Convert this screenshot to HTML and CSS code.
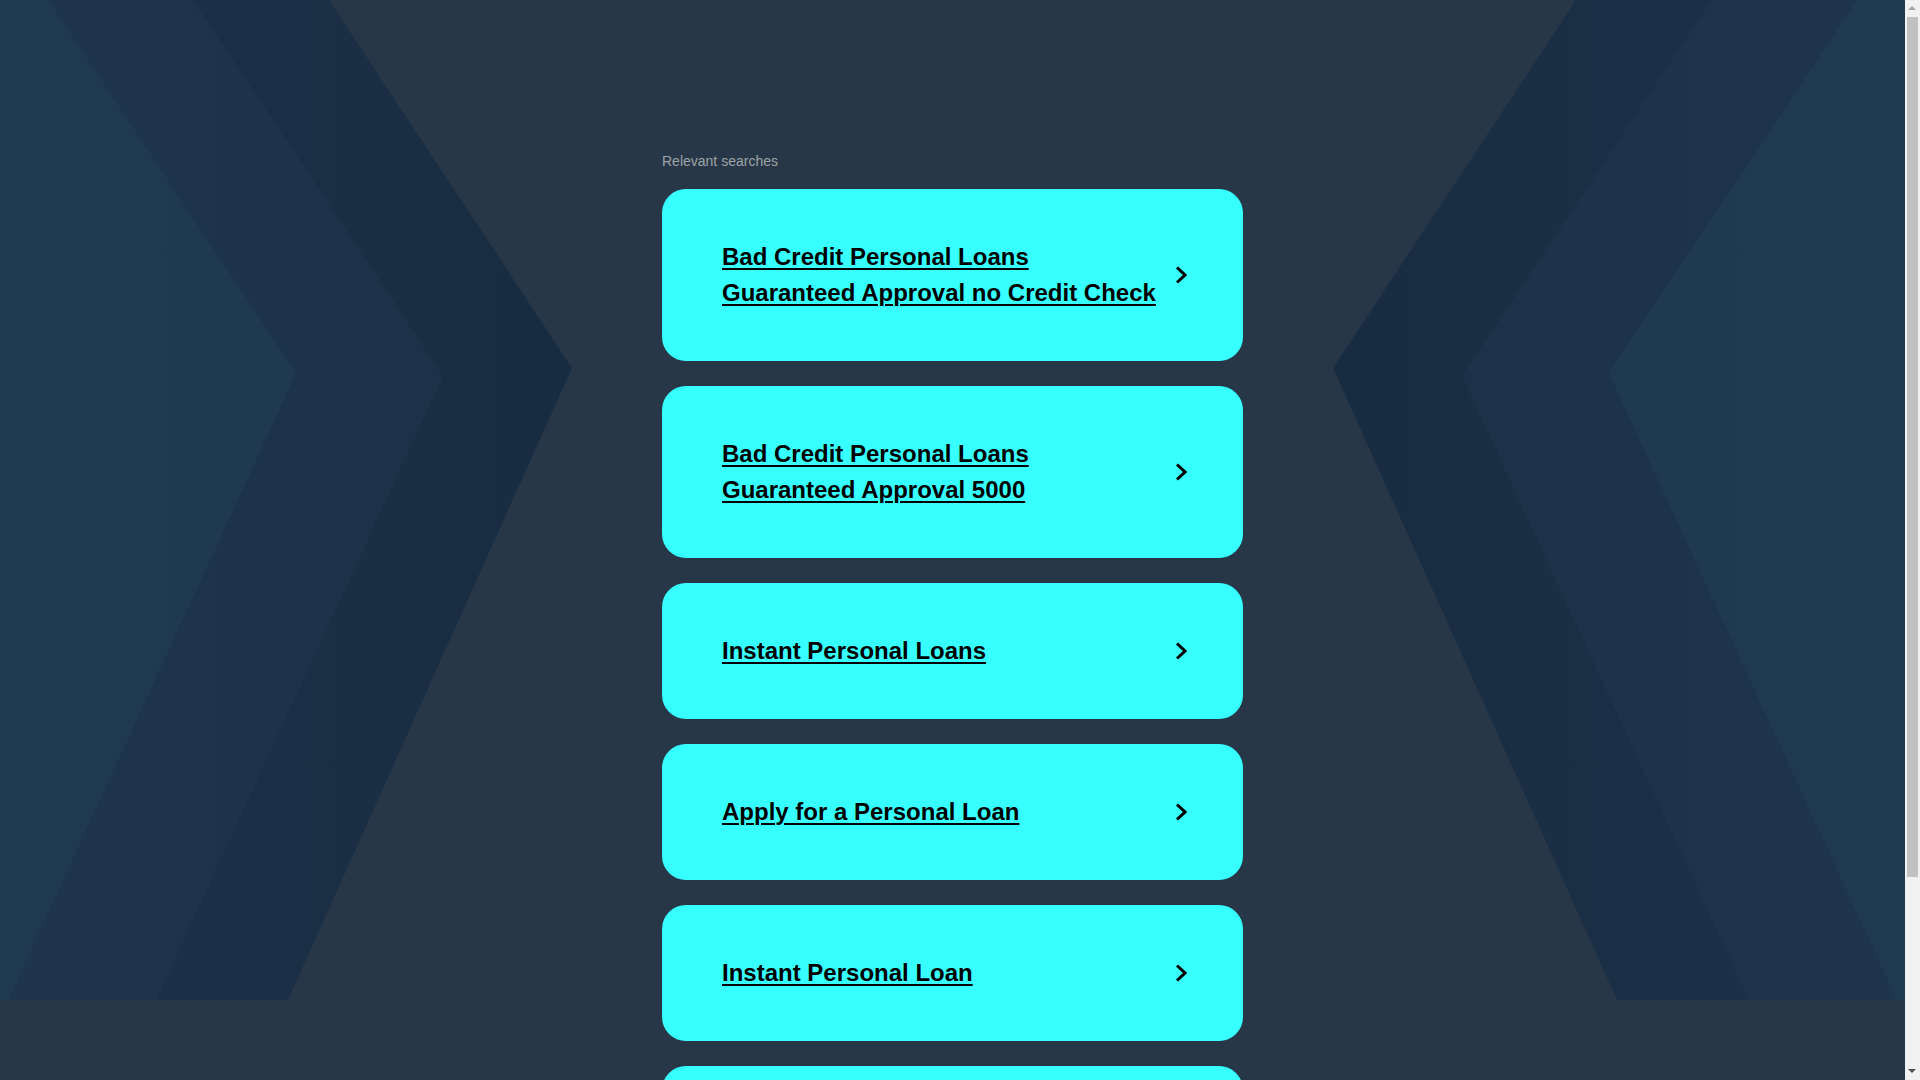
FILE: index.html
```html
<!DOCTYPE html>
<html lang="en">
<head>
<meta charset="utf-8">
<title>Relevant searches</title>
<link rel="stylesheet" href="styles.css">
</head>
<body>
<div class="bg" aria-hidden="true">
  <svg class="bg-svg" viewBox="0 0 1905 1000" preserveAspectRatio="none" xmlns="http://www.w3.org/2000/svg">
    <defs>
      <linearGradient id="gOuter" x1="0" y1="0" x2="1" y2="0">
        <stop offset="0" stop-color="#1c3249"/>
        <stop offset="1" stop-color="#182c41"/>
      </linearGradient>
      <linearGradient id="gMid" x1="0" y1="0" x2="1" y2="0">
        <stop offset="0" stop-color="#1f354c"/>
        <stop offset="1" stop-color="#1c3249"/>
      </linearGradient>
      <linearGradient id="gInner" x1="0" y1="0" x2="1" y2="0">
        <stop offset="0" stop-color="#203a51"/>
        <stop offset="1" stop-color="#1f3a50"/>
      </linearGradient>
    </defs>
    <g>
      <polygon points="0,0 329,0 572,368 288,1000 0,1000" fill="url(#gOuter)"/>
      <polygon points="0,0 193,0 443,376 156,1000 0,1000" fill="url(#gMid)"/>
      <polygon points="0,0 48,0 296,373 8,1000 0,1000" fill="url(#gInner)"/>
    </g>
    <g transform="translate(1905,0) scale(-1,1)">
      <polygon points="0,0 329,0 572,368 288,1000 0,1000" fill="url(#gOuter)"/>
      <polygon points="0,0 193,0 443,376 156,1000 0,1000" fill="url(#gMid)"/>
      <polygon points="0,0 48,0 296,373 8,1000 0,1000" fill="url(#gInner)"/>
    </g>
  </svg>
</div>

<main class="content">
  <div class="heading">Relevant searches</div>
  <ul class="list">
    <li><a class="card" href="#"><span class="label">Bad Credit Personal Loans Guaranteed Approval no Credit Check</span><svg class="chev" viewBox="0 0 12 20"><polyline points="2,2.5 10,10 2,17.5"/></svg></a></li>
    <li><a class="card" href="#"><span class="label">Bad Credit Personal Loans Guaranteed Approval 5000</span><svg class="chev" viewBox="0 0 12 20"><polyline points="2,2.5 10,10 2,17.5"/></svg></a></li>
    <li><a class="card" href="#"><span class="label">Instant Personal Loans</span><svg class="chev" viewBox="0 0 12 20"><polyline points="2,2.5 10,10 2,17.5"/></svg></a></li>
    <li><a class="card" href="#"><span class="label">Apply for a Personal Loan</span><svg class="chev" viewBox="0 0 12 20"><polyline points="2,2.5 10,10 2,17.5"/></svg></a></li>
    <li><a class="card" href="#"><span class="label">Instant Personal Loan</span><svg class="chev" viewBox="0 0 12 20"><polyline points="2,2.5 10,10 2,17.5"/></svg></a></li>
    <li><a class="card" href="#"><span class="label">Personal Loans for Bad Credit</span><svg class="chev" viewBox="0 0 12 20"><polyline points="2,2.5 10,10 2,17.5"/></svg></a></li>
  </ul>
</main>

<div class="scrollbar" aria-hidden="true">
  <span class="sb-btn sb-up"></span>
  <span class="sb-thumb"></span>
  <span class="sb-btn sb-down"></span>
</div>
</body>
</html>
```

FILE: styles.css
```css
html, body {
  margin: 0;
  padding: 0;
}

body {
  background: #283747;
  font-family: "Liberation Sans", Arial, sans-serif;
  position: relative;
  margin-right: 15px;
  min-height: 100vh;
}

.bg {
  position: absolute;
  top: 0;
  left: 0;
  width: 100%;
  height: 1000px;
  z-index: 0;
  overflow: hidden;
}

.bg-svg {
  display: block;
  width: 100%;
  height: 1000px;
}

.content {
  position: relative;
  z-index: 1;
  width: 581px;
  margin: 0 auto;
  padding-top: 151px;
  padding-bottom: 60px;
}

.heading {
  font-size: 14px;
  line-height: 20px;
  color: #9ea3a8;
  margin-bottom: 18px;
}

.list {
  list-style: none;
  margin: 0;
  padding: 0;
  display: flex;
  flex-direction: column;
  gap: 25px;
}

.card {
  display: flex;
  align-items: center;
  background: #37ffff;
  border-radius: 24px;
  padding: 50px 56px 50px 60px;
  text-decoration: none;
  color: #000;
}

.label {
  flex: 1;
  font-size: 24px;
  line-height: 36px;
  font-weight: bold;
  color: #000;
  text-decoration: underline;
  text-decoration-thickness: 2px;
  text-underline-offset: 3px;
}

.chev {
  width: 12px;
  height: 20px;
  margin-left: 13px;
  flex: none;
}

.chev polyline {
  fill: none;
  stroke: #000;
  stroke-width: 3;
  stroke-linecap: butt;
  stroke-linejoin: miter;
}

/* imitation of the browser's classic scrollbar */
.scrollbar {
  position: fixed;
  top: 0;
  right: 0;
  width: 15px;
  height: 100vh;
  background: #f1f1f1;
  display: flex;
  flex-direction: column;
  z-index: 5;
}

.sb-btn {
  flex: none;
  height: 17px;
  position: relative;
}

.sb-btn::after {
  content: "";
  position: absolute;
  left: 3px;
  width: 0;
  height: 0;
  border-left: 4.5px solid transparent;
  border-right: 4.5px solid transparent;
}

.sb-up::after {
  top: 6px;
  border-bottom: 4.5px solid #a3a3a3;
}

.sb-down::after {
  top: 6px;
  border-top: 4.5px solid #505050;
}

.sb-thumb {
  flex: none;
  height: 860px;
  margin: 0 2px;
  background: #c1c1c1;
}

.scrollbar::after {
  content: "";
  flex: 1;
}

.sb-down {
  order: 3;
}

.scrollbar::after {
  order: 2;
}
```
